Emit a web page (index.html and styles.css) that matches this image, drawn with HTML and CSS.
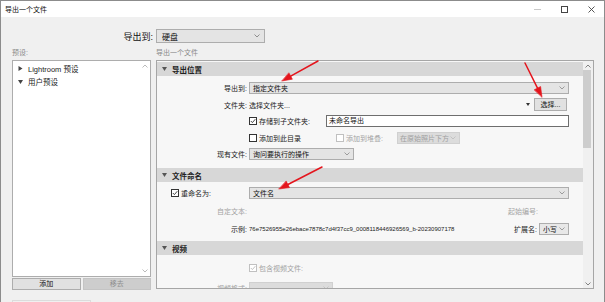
FILE: index.html
```html
<!DOCTYPE html>
<html lang="zh-CN">
<head>
  <meta charset="UTF-8" />
  <title>导出一个文件</title>
  <link rel="stylesheet" href="styles.css">
</head>
<body>
  <div class="window">
    <div class="titlebar">
      <span class="title">导出一个文件</span>
      <div class="win-btns">
        <svg width="7" height="7" viewBox="0 0 7 7"><path d="M0 3.5H7" stroke="#c8c8c8" stroke-width="1"/></svg>
        <svg width="7" height="7" viewBox="0 0 7 7"><rect x="0.5" y="0.5" width="6" height="6" fill="none" stroke="#444" stroke-width="1"/></svg>
        <svg width="7" height="7" viewBox="0 0 7 7"><path d="M0.5 0.5L6.5 6.5M6.5 0.5L0.5 6.5" stroke="#444" stroke-width="0.9"/></svg>
      </div>
    </div>

    <div class="content">
      <div class="dest-row">
        <span class="dest-label">导出到:</span>
        <div class="select dest-select"><span>硬盘</span><svg class="chev" width="6" height="4" viewBox="0 0 6 4"><path d="M0.5 0.5L3 3L5.5 0.5" fill="none" stroke="#777" stroke-width="0.8"/></svg></div>
      </div>

      <div class="main">
        <div class="left">
          <div class="caption">预设:</div>
          <div class="preset-list">
            <div class="tree">
              <div class="tree-item"><svg class="tri" width="4" height="5" viewBox="0 0 4 5"><path d="M0 0L4 2.5L0 5Z" fill="#444"/></svg><span>Lightroom 预设</span></div>
              <div class="tree-item"><svg class="tri" width="5" height="4" viewBox="0 0 5 4"><path d="M0 0L5 0L2.5 4Z" fill="#444"/></svg><span>用户预设</span></div>
            </div>
            <div class="list-scroll">
              <svg width="6" height="4" viewBox="0 0 6 4"><path d="M0.5 3.5L3 1L5.5 3.5" fill="none" stroke="#aaa" stroke-width="0.8"/></svg>
              <svg width="6" height="4" viewBox="0 0 6 4"><path d="M0.5 0.5L3 3L5.5 0.5" fill="none" stroke="#aaa" stroke-width="0.8"/></svg>
            </div>
          </div>
          <div class="left-btns">
            <div class="btn">添加</div>
            <div class="btn disabled">移去</div>
          </div>
          <div class="footer-btn"></div>
        </div>

        <div class="right">
          <div class="caption">导出一个文件</div>
          <div class="panel">
            <div class="panel-content">

              <div class="section-head"><svg class="tri" width="5" height="4" viewBox="0 0 5 4"><path d="M0 0L5 0L2.5 4Z" fill="#555"/></svg><span>导出位置</span></div>
              <div class="section-body s1">
                <div class="row">
                  <span class="label">导出到:</span>
                  <div class="select wide"><span>指定文件夹</span><svg class="chev" width="6" height="4" viewBox="0 0 6 4"><path d="M0.5 0.5L3 3L5.5 0.5" fill="none" stroke="#888" stroke-width="0.8"/></svg></div>
                </div>
                <div class="row">
                  <span class="label">文件夹:</span>
                  <span class="value grow">选择文件夹...</span>
                  <svg class="caret" width="4" height="3" viewBox="0 0 4 3"><path d="M0 0L4 0L2 3Z" fill="#333"/></svg>
                  <div class="btn choose">选择...</div>
                </div>
                <div class="row">
                  <span class="label"></span>
                  <span class="check on"><svg width="6" height="6" viewBox="0 0 6 6"><path d="M0.8 3L2.4 4.6L5.3 1.2" fill="none" stroke="#333" stroke-width="0.9"/></svg></span>
                  <span class="check-text">存储到子文件夹:</span>
                  <div class="input">未命名导出</div>
                </div>
                <div class="row">
                  <span class="label"></span>
                  <span class="check"></span>
                  <span class="check-text">添加到此目录</span>
                  <span class="check dim stack-check"></span>
                  <span class="check-text dim">添加到堆叠:</span>
                  <div class="select off stack-select"><span>在原始照片下方</span><svg class="chev" width="6" height="4" viewBox="0 0 6 4"><path d="M0.5 0.5L3 3L5.5 0.5" fill="none" stroke="#bbb" stroke-width="0.8"/></svg></div>
                </div>
                <div class="row">
                  <span class="label">现有文件:</span>
                  <div class="select exist-select"><span>询问要执行的操作</span><svg class="chev" width="6" height="4" viewBox="0 0 6 4"><path d="M0.5 0.5L3 3L5.5 0.5" fill="none" stroke="#888" stroke-width="0.8"/></svg></div>
                </div>
              </div>

              <div class="section-head"><svg class="tri" width="5" height="4" viewBox="0 0 5 4"><path d="M0 0L5 0L2.5 4Z" fill="#555"/></svg><span>文件命名</span></div>
              <div class="section-body s2">
                <div class="row">
                  <span class="label left-label"><span class="check on"><svg width="6" height="6" viewBox="0 0 6 6"><path d="M0.8 3L2.4 4.6L5.3 1.2" fill="none" stroke="#333" stroke-width="0.9"/></svg></span><span class="check-text">重命名为:</span></span>
                  <div class="select wide"><span>文件名</span><svg class="chev" width="6" height="4" viewBox="0 0 6 4"><path d="M0.5 0.5L3 3L5.5 0.5" fill="none" stroke="#888" stroke-width="0.8"/></svg></div>
                </div>
                <div class="row">
                  <span class="label dim">自定文本:</span>
                  <span class="grow"></span>
                  <span class="dim start-num">起始编号:</span>
                </div>
                <div class="row">
                  <span class="label">示例:</span>
                  <span class="example">76e7526955e26ebace7878c7d4f37cc9_0008118446926569_b-20230907178</span>
                  <span class="grow"></span>
                  <span class="ext-label">扩展名:</span>
                  <div class="select ext-select"><span>小写</span><svg class="chev" width="6" height="4" viewBox="0 0 6 4"><path d="M0.5 0.5L3 3L5.5 0.5" fill="none" stroke="#888" stroke-width="0.8"/></svg></div>
                </div>
              </div>

              <div class="section-head"><svg class="tri" width="5" height="4" viewBox="0 0 5 4"><path d="M0 0L5 0L2.5 4Z" fill="#555"/></svg><span>视频</span></div>
              <div class="section-body s3">
                <div class="row">
                  <span class="label"></span>
                  <span class="check on dim"><svg width="6" height="6" viewBox="0 0 6 6"><path d="M0.8 3L2.4 4.6L5.3 1.2" fill="none" stroke="#bbb" stroke-width="0.9"/></svg></span>
                  <span class="check-text dim">包含视频文件:</span>
                </div>
                <div class="row">
                  <span class="label dim">视频格式:</span>
                  <div class="select off video-select"><span></span><svg class="chev" width="6" height="4" viewBox="0 0 6 4"><path d="M0.5 0.5L3 3L5.5 0.5" fill="none" stroke="#bbb" stroke-width="0.8"/></svg></div>
                </div>
              </div>

            </div>
            <div class="scrollbar">
              <div class="sb-arrow"><svg width="6" height="4" viewBox="0 0 6 4"><path d="M0.5 3.5L3 1L5.5 3.5" fill="none" stroke="#666" stroke-width="0.8"/></svg></div>
              <div class="sb-thumb"></div>
              <div class="sb-track"></div>
              <div class="sb-arrow"><svg width="6" height="4" viewBox="0 0 6 4"><path d="M0.5 0.5L3 3L5.5 0.5" fill="none" stroke="#666" stroke-width="0.8"/></svg></div>
            </div>
          </div>
        </div>
      </div>
    </div>
  </div>

  <svg class="arrows" width="605" height="302" viewBox="0 0 605 302">
    <g stroke="#e4151d" stroke-width="1.5" stroke-linecap="round" fill="#e4151d">
      <line x1="318" y1="61" x2="290.7" y2="76.2"/>
      <polygon points="282,81 292.4,79.2 289,73.1" stroke-width="0.6"/>
      <line x1="525" y1="63" x2="537.5" y2="88.1"/>
      <polygon points="542,97 540.6,86.5 534.4,89.7" stroke-width="0.6"/>
      <line x1="322" y1="167" x2="287.9" y2="184.5"/>
      <polygon points="279,189 289.5,187.6 286.3,181.3" stroke-width="0.6"/>
    </g>
  </svg>
</body>
</html>
```

FILE: styles.css
```css
* {
  box-sizing: border-box;
}

body {
  margin: 0;
  background: #fff;
  font-family: "Liberation Sans", "Noto Sans CJK SC", sans-serif;
  font-size: 7px;
  color: #222;
}

.window {
  width: 605px;
  height: 302px;
  border: 1px solid #8c8c8c;
  border-bottom: none;
  background: #f0f0f0;
  overflow: hidden;
}

.titlebar {
  height: 16px;
  background: #fff;
  display: flex;
  align-items: center;
  padding-left: 4px;
  padding-right: 9px;
}

.title {
  flex: 1;
  font-size: 7px;
  color: #111;
}

.win-btns {
  display: flex;
  gap: 20px;
}

.win-btns svg {
  display: block;
}

.content {
  padding: 12px 0 0 11px;
}

.dest-row {
  display: flex;
  align-items: center;
  height: 14px;
}

.dest-label {
  width: 141px;
  text-align: right;
  margin-right: 3px;
  font-size: 9px;
  color: #111;
}

.select {
  display: flex;
  align-items: center;
  justify-content: space-between;
  height: 12px;
  padding: 0 3px 0 3px;
  background: #e4e4e4;
  border: 1px solid #adadad;
  color: #111;
  white-space: nowrap;
  overflow: hidden;
}

.select .chev {
  flex-shrink: 0;
}

.dest-select {
  width: 109px;
  height: 14px;
  font-size: 8px;
  padding-left: 5px;
  padding-right: 4px;
}

.main {
  display: flex;
  gap: 5px;
  margin-top: 4px;
}

.caption {
  height: 12px;
  line-height: 12px;
  margin-bottom: 1px;
  color: #8a8a8a;
}

/* left side */
.left {
  width: 139px;
  flex-shrink: 0;
}

.preset-list {
  height: 217px;
  background: #fff;
  border: 1px solid #adadad;
  display: flex;
}

.tree {
  flex: 1;
  padding-top: 1px;
}

.tree-item {
  display: flex;
  align-items: center;
  height: 13px;
  padding-left: 5px;
  font-size: 7.5px;
}

.tree-item .tri {
  width: 5px;
  margin-right: 5px;
}

.list-scroll {
  width: 10px;
  display: flex;
  flex-direction: column;
  justify-content: space-between;
  align-items: center;
  padding: 3px 0 3px;
}

.left-btns {
  display: grid;
  grid-template-columns: 1fr 1fr;
  gap: 2px;
  margin-top: 1px;
}

.btn {
  height: 12px;
  line-height: 10px;
  text-align: center;
  background: #e1e1e1;
  border: 1px solid #adadad;
  color: #111;
}

.btn.disabled {
  background: #cdcdcd;
  border-color: #c4c4c4;
  color: #8d8d8d;
}

.footer-btn {
  width: 79px;
  height: 10px;
  margin-top: 10px;
  border: 1px solid #dcdcdc;
}

/* right side */
.right {
  width: 438px;
  flex-shrink: 0;
}

.panel {
  height: 229px;
  border: 1px solid #a6a6a6;
  background: #f7f7f7;
  display: flex;
}

.panel-content {
  flex: 1;
  padding-top: 1px;
  overflow: hidden;
}

.section-head {
  display: flex;
  align-items: center;
  height: 14px;
  background: #d7d7d7;
  padding-left: 5px;
  font-weight: bold;
  font-size: 7.5px;
  color: #222;
}

.section-head .tri {
  margin-right: 5px;
}

.section-body {
  display: flex;
  flex-direction: column;
  padding-right: 14px;
}

.s1 {
  gap: 4.5px;
  padding-top: 6px;
  padding-bottom: 8px;
}

.s2 {
  gap: 6px;
  padding-top: 5px;
  padding-bottom: 6px;
}

.s3 {
  gap: 8px;
  padding-top: 7px;
}

.row {
  display: flex;
  align-items: center;
  height: 12px;
  white-space: nowrap;
}

.label {
  width: 90px;
  flex-shrink: 0;
  text-align: right;
  margin-right: 2px;
}

.left-label {
  display: flex;
  align-items: center;
  text-align: left;
  padding-left: 14px;
}

.dim {
  color: #a3a3a3;
}

.grow {
  flex: 1;
}

.wide {
  width: 320px;
}

.caret {
  margin-right: 4px;
}

.btn.choose {
  width: 33px;
  height: 13px;
  line-height: 11px;
  margin-right: 2px;
}

.check {
  display: inline-flex;
  align-items: center;
  justify-content: center;
  width: 8px;
  height: 8px;
  border: 1px solid #333;
  background: #fff;
  flex-shrink: 0;
  margin-right: 2px;
}

.check.dim {
  border-color: #c0c0c0;
}

.check-text {
  flex-shrink: 0;
}

.input {
  width: 243px;
  height: 12px;
  line-height: 10px;
  margin-left: auto;
  padding-left: 2px;
  background: #fff;
  border: 1px solid #6e6e6e;
  color: #111;
}

.stack-check {
  margin-left: 35px;
}

.select.off {
  background: #dcdcdc;
  border-color: #d0d0d0;
  color: #a0a0a0;
}

.stack-select {
  width: 63px;
  margin-left: 14px;
  padding-left: 2px;
}

.exist-select {
  width: 105px;
}

.start-num {
  margin-right: 31px;
}

.example {
  width: 214px;
  overflow: hidden;
  font-size: 6px;
  color: #222;
}

.ext-label {
  margin-right: 2px;
}

.ext-select {
  width: 30px;
  background: #e8e8e8;
}

.video-select {
  width: 84px;
}

.scrollbar {
  width: 10px;
  display: flex;
  flex-direction: column;
  background: #f0f0f0;
}

.sb-arrow {
  height: 9px;
  display: flex;
  align-items: center;
  justify-content: center;
}

.sb-thumb {
  height: 78px;
  width: 8px;
  background: #cdcdcd;
}

.sb-track {
  flex: 1;
}

.arrows {
  position: absolute;
  top: 0;
  left: 0;
  pointer-events: none;
}
```
